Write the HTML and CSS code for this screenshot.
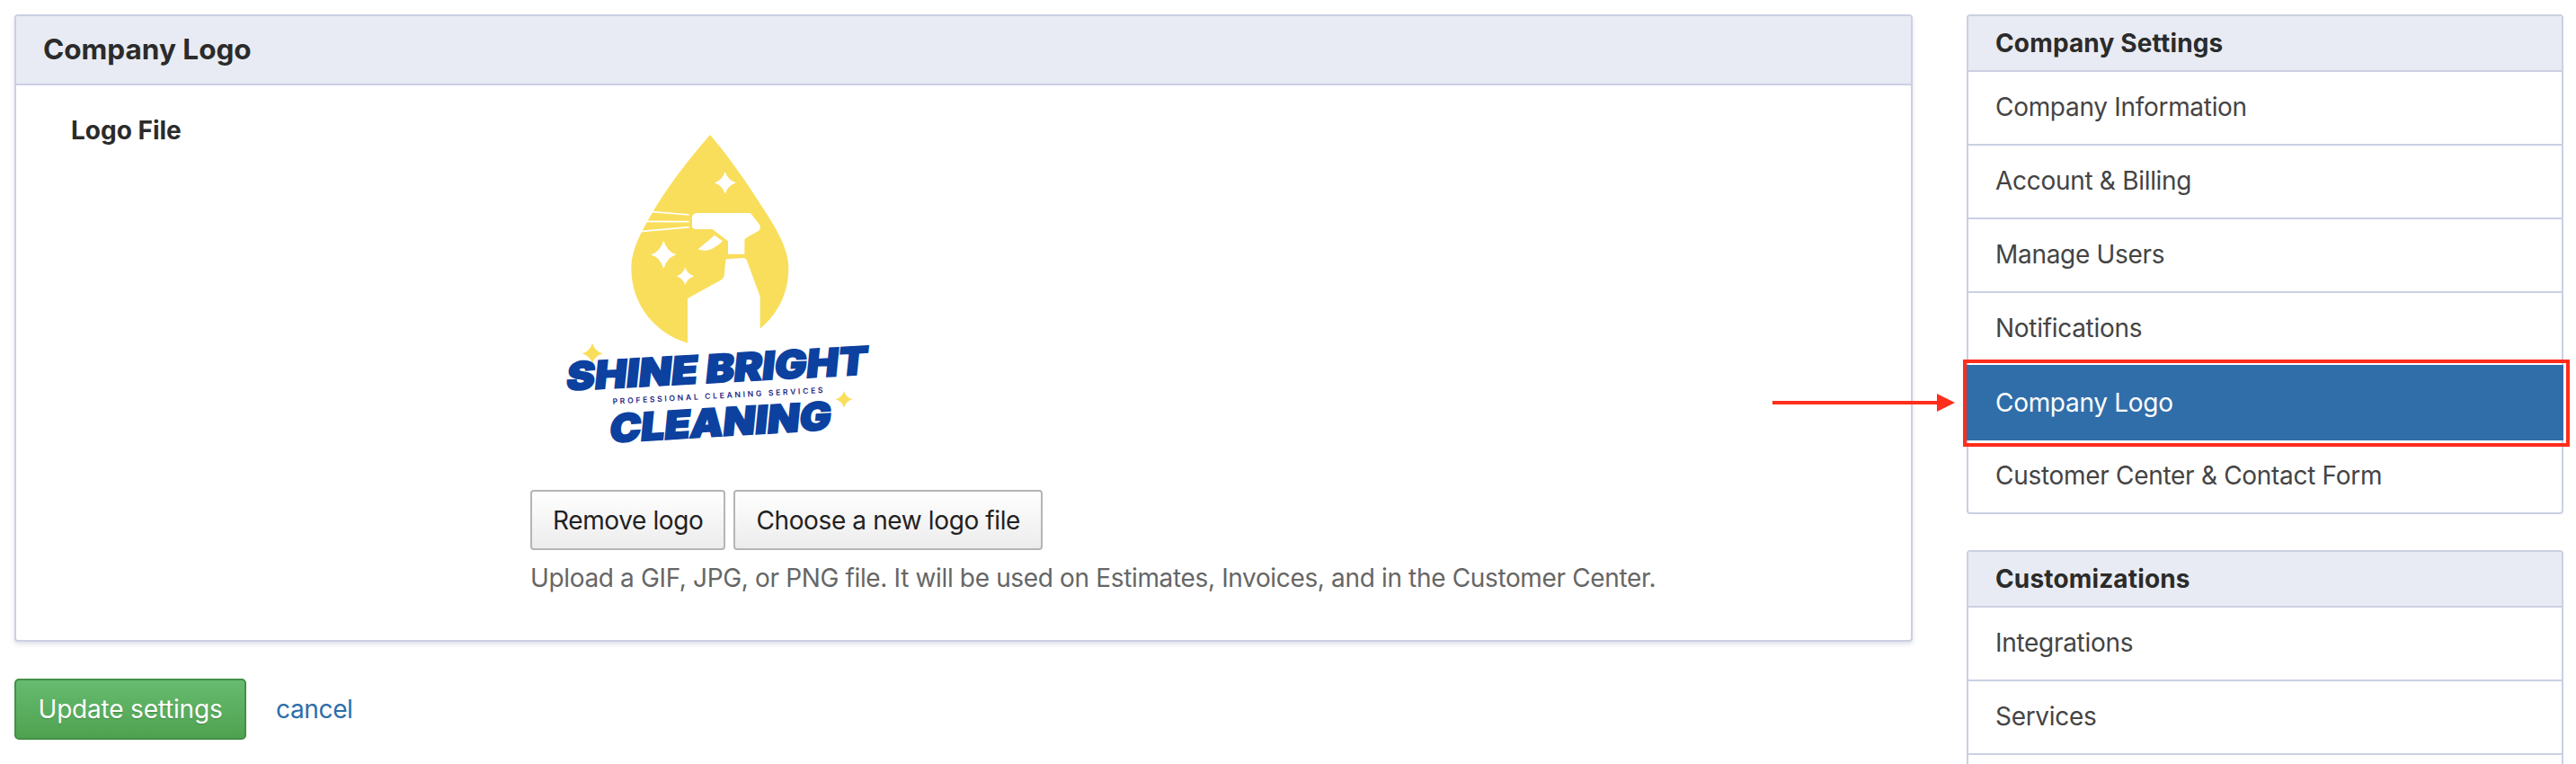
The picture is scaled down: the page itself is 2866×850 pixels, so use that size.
FILE: index.html
```html
<!DOCTYPE html>
<html lang="en">
<head>
<meta charset="utf-8">
<title>Company Logo</title>
<link rel="stylesheet" href="styles.css">
</head>
<body>
<div class="page">
  <main class="main">
    <section class="card">
      <h2 class="card-title">Company Logo</h2>
      <div class="card-body">
        <div class="field-label">Logo File</div>
        <div class="field">
          <svg class="logo" viewBox="90 0 1290 1140" width="430" height="380" role="img" aria-label="Shine Bright Cleaning logo">
            <path class="yellow" d="M690 60C620 140 550 230 500 315C465 375 427 440 427 505C427 630 510 725 615 755L857 707C915 660 952 590 952 505C952 440 910 370 860 295C810 215 750 130 690 60Z"/>
            <path class="white" d="M630 332Q632 324 645 321L820 321Q825 321 828 325L855 360Q862 372 850 382L810 404Q805 407 805 412L805 458L750 458L750 415L698 375L645 375Q632 373 630 368Z"/>
            <path class="white" d="M745 475L800 471Q808 471 812 477L857 600L857 712L615 765L615 610Q616 604 622 602L728 544Q736 538 737 530L742 480Q743 475 745 475Z"/>
            <path class="white" d="M650 442L705 395L732 415Q710 437 685 445Q665 448 650 442Z"/>
            <path class="spray" d="M490 316L620 327M472 349L620 350M455 383L620 368"/>
            <path class="white" d="M740 183Q749 211 777 220Q749 229 740 257Q731 229 705 220Q731 211 740 183Z"/>
            <path class="white" d="M535 413Q546 449 577 460Q546 471 535 506Q524 471 493 460Q524 449 535 413Z"/>
            <path class="white" d="M607 502Q614 525 637 532Q614 539 607 562Q600 539 578 532Q600 525 607 502Z"/>
            <path class="yellow" d="M297 755Q305 782 332 790Q305 798 297 822Q289 798 263 790Q289 782 297 755Z"/>
            <path class="yellow" d="M1137 915Q1143 937 1166 943Q1143 949 1137 971Q1131 949 1108 943Q1131 937 1137 915Z"/>
            <text class="logo-big" transform="translate(208 913) rotate(-3.1) skewX(-9)" textLength="1005" lengthAdjust="spacingAndGlyphs">SHINE BRIGHT</text>
            <text class="logo-tag" transform="translate(365 959) rotate(-3.1)" textLength="703">PROFESSIONAL CLEANING SERVICES</text>
            <text class="logo-big" transform="translate(352 1087) rotate(-3.4) skewX(-9)" textLength="740" lengthAdjust="spacingAndGlyphs">CLEANING</text>
          </svg>
          <div class="logo-actions">
            <button class="btn" type="button">Remove logo</button>
            <button class="btn" type="button">Choose a new logo file</button>
          </div>
          <p class="help">Upload a GIF, JPG, or PNG file. It will be used on Estimates, Invoices, and in the Customer Center.</p>
        </div>
      </div>
    </section>
    <div class="form-actions">
      <button class="btn-primary" type="button">Update settings</button>
      <a class="cancel" href="#">cancel</a>
    </div>
  </main>
  <aside class="sidebar">
    <nav class="nav-box">
      <h3 class="nav-title">Company Settings</h3>
      <a class="nav-item" href="#">Company Information</a>
      <a class="nav-item" href="#">Account &amp; Billing</a>
      <a class="nav-item" href="#">Manage Users</a>
      <a class="nav-item" href="#">Notifications</a>
      <a class="nav-item active" href="#">Company Logo</a>
      <a class="nav-item" href="#">Customer Center &amp; Contact Form</a>
    </nav>
    <nav class="nav-box">
      <h3 class="nav-title">Customizations</h3>
      <a class="nav-item" href="#">Integrations</a>
      <a class="nav-item" href="#">Services</a>
      <a class="nav-item" href="#"></a>
    </nav>
  </aside>
</div>
<div class="annot-line"></div>
<div class="annot-head"></div>
<div class="annot-box"></div>
</body>
</html>
```
FILE: styles.css
```css
* { box-sizing: border-box; }
html, body { margin: 0; height: 850px; overflow: hidden; background: #fff; }
body { font-family: Inter, "Liberation Sans", sans-serif; font-size: 28px; letter-spacing: -0.35px; color: #444; position: relative; }
.page { display: flex; gap: 60px; height: 850px; overflow: hidden; padding: 16px 14px 0 16px; align-items: flex-start; }
.main { width: 2112px; flex: none; }
.card { border: 2px solid #cbd0e2; border-radius: 4px; box-shadow: 0 3px 5px rgba(120,125,160,.22); background: #fff; height: 698px; }
.card-title { margin: 0; height: 77px; padding: 0 30px; line-height: 74px; font-size: 31.5px; letter-spacing: 0; font-weight: 700; color: #2b2b2b; background: #e8ebf3; border-bottom: 2px solid #cbd0e2; }
.card-body { display: flex; padding: 35px 0 0 61px; }
.field-label { width: 511px; flex: none; font-weight: 700; letter-spacing: 0; color: #2b2b2b; line-height: 34px; margin-top: -2px; }
.logo { display: block; }
.yellow { fill: #f9de5c; }
.white { fill: #fff; }
.spray { stroke: #fff; stroke-width: 5; fill: none; }
.logo-big { font-family: Inter, "Liberation Sans", sans-serif; font-size: 128px; font-weight: 900; letter-spacing: 0; fill: #0c419f; stroke: #0c419f; stroke-width: 6px; }
.logo-tag { font-family: Inter, "Liberation Sans", sans-serif; font-size: 26px; font-weight: 600; letter-spacing: 0; fill: #1f2a85; }
.logo-actions { display: flex; gap: 9px; margin-top: 35px; }
.btn { height: 67px; padding: 0 23px; border: 2px solid #b5b5b5; border-radius: 4px; background: linear-gradient(#fff, #ececec); font: 400 28px Inter, "Liberation Sans", sans-serif; letter-spacing: -0.38px; color: #222; }
.help { margin: 11px 0 0; font-size: 28px; line-height: 40px; color: #666; }
.form-actions { display: flex; align-items: center; gap: 33px; margin-top: 41px; }
.btn-primary { width: 258px; height: 68px; padding: 0; border: 2px solid #439048; border-radius: 5px; background: linear-gradient(#67bb70, #4ea24f); color: #fff; font: 400 28px Inter, "Liberation Sans", sans-serif; letter-spacing: -0.2px; text-shadow: 0 1px 1px rgba(0,0,0,.2); }
.cancel { color: #2e6da9; text-decoration: none; }
.sidebar { width: 664px; flex: none; display: flex; flex-direction: column; gap: 40px; }
.nav-box { display: flex; flex-direction: column; border: 2px solid #cbd0e2; border-radius: 4px; background: #fff; }
.nav-title { margin: 0; height: 62px; padding: 0 30px; line-height: 60px; font-size: 28px; letter-spacing: 0.15px; font-weight: 700; color: #2b2b2b; background: #e8ebf3; border-bottom: 2px solid #cbd0e2; }
.nav-item { display: block; flex: none; height: 82px; padding: 0 30px; line-height: 79px; letter-spacing: -0.3px; color: #444; text-decoration: none; border-bottom: 2px solid #cbd0e2; }
.nav-item:last-child { border-bottom: 0; height: 80px; }
.nav-item.active { background: #306eaa; color: #fff; border-bottom: 0; height: 84px; line-height: 84px; margin: -2px -2px 0; padding-left: 32px; }
.annot-line { position: absolute; left: 1972px; top: 446px; width: 184px; height: 4px; background: #ff2d1c; }
.annot-head { position: absolute; left: 2155px; top: 438px; width: 0; height: 0; border-left: 20px solid #ff2d1c; border-top: 10px solid transparent; border-bottom: 10px solid transparent; }
.annot-box { position: absolute; left: 2184px; top: 400px; width: 675px; height: 97px; border: 4px solid #ff2d1c; }
```
